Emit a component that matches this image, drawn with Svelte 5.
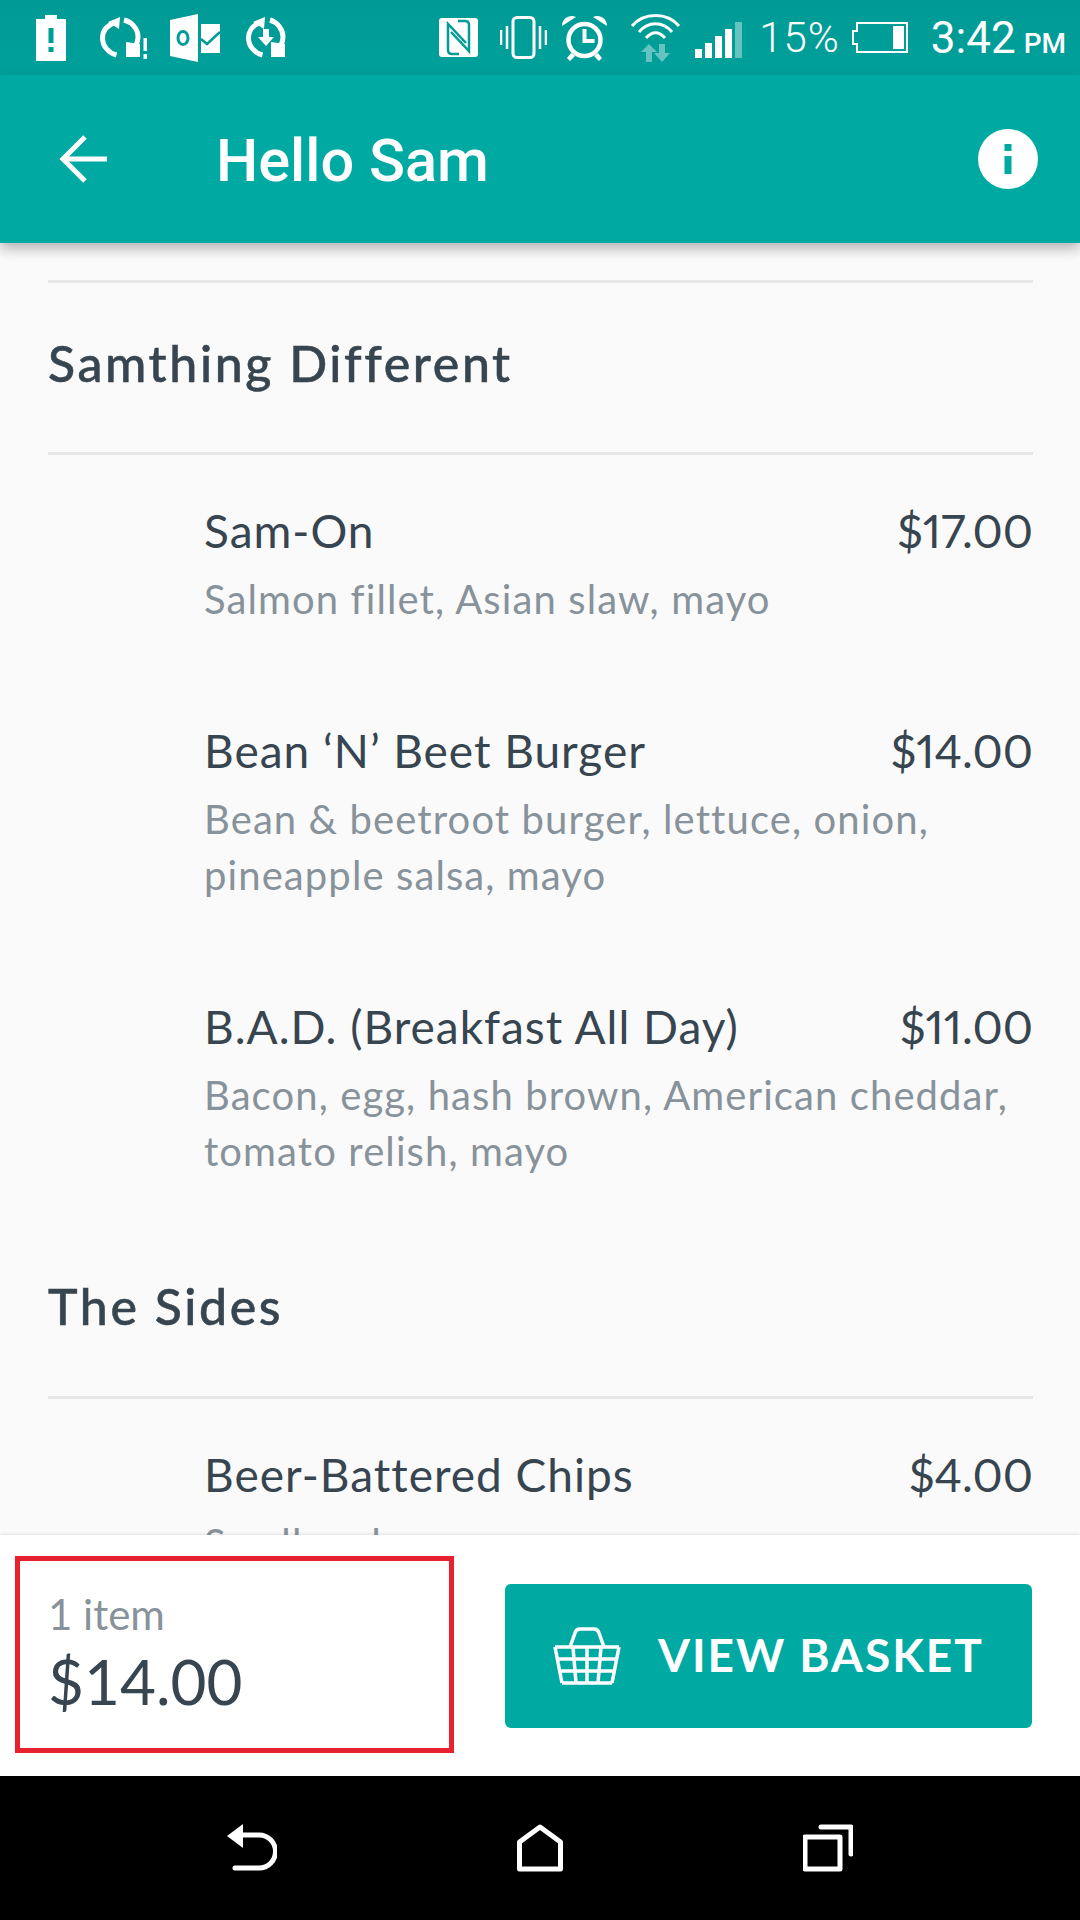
<script>
  const sections = [
    { title: 'Samthing Different', cls: 'first', items: [
      { name: 'Sam-On', price: '$17.00', desc: ['Salmon fillet, Asian slaw, mayo'] },
      { name: 'Bean ‘N’ Beet Burger', price: '$14.00', desc: ['Bean & beetroot burger, lettuce, onion,', 'pineapple salsa, mayo'] },
      { name: 'B.A.D. (Breakfast All Day)', price: '$11.00', desc: ['Bacon, egg, hash brown, American cheddar,', 'tomato relish, mayo'] }
    ]},
    { title: 'The Sides', cls: 'second', items: [
      { name: 'Beer-Battered Chips', price: '$4.00', desc: ['Small and'] }
    ]}
  ];
</script>

<div class="screen">
  <div class="status">
    <div class="st-left">
      <svg class="ic" width="30" height="46" viewBox="0 0 30 46"><path fill="#fff" d="M9 0h12v4h9v42H0V4h9z"/><rect x="12.500" y="13" width="5" height="15" fill="#009c97"/><rect x="12.500" y="32" width="5" height="5" fill="#009c97"/></svg>
      <svg class="ic s1" width="48" height="42" viewBox="0 0 48 42"><g fill="none" stroke="#fff" stroke-width="5"><path d="M14 6C6 9 2.500 15 2.500 21c0 8 6 15 14 17"/><path d="M24 3c8 2 14 9 14 17 0 3-1 6-2 8"/></g><path fill="#fff" d="M8 5L20 0l-1 12zM26 25v15h14V27z"/><rect x="43.500" y="21" width="3.500" height="13" fill="#fff"/><rect x="43.500" y="37" width="3.500" height="5" fill="#fff"/></svg>
      <svg class="ic s2" width="50" height="48" viewBox="0 0 50 48"><path fill="#fff" d="M0 6L28 0v48L0 42z"/><ellipse cx="13" cy="24" rx="5" ry="6.500" fill="none" stroke="#009c97" stroke-width="3"/><rect x="31" y="10" width="19" height="29" fill="#fff"/><path d="M31 25l6 5 13-12" fill="none" stroke="#009c97" stroke-width="2.500"/></svg>
      <svg class="ic s3" width="40" height="42" viewBox="0 0 40 42"><g fill="none" stroke="#fff" stroke-width="5"><path d="M13 6C6 9 2.500 15 2.500 21c0 8 6 15 14 17"/><path d="M24 3c7 2 13 9 13 17 0 3-1 6-2 8"/></g><path fill="#fff" d="M7 5L19 0l-1 12zM25 25v15h14V27z"/><path fill="#fff" d="M17 12h6v8h5l-8 9-8-9h5z"/></svg>
    </div>
    <div class="st-right">
      <svg class="ic" width="39" height="39" viewBox="0 0 39 39"><rect width="39" height="39" rx="3" fill="#fff"/><path d="M20 36H13q-4 0-4-4V6l18 19M19 3h7q4 0 4 4v26L12 14" fill="none" stroke="#009c97" stroke-width="2.500"/></svg>
      <svg class="ic s4" width="47" height="43" viewBox="0 0 47 43"><rect x="13" y="1.500" width="21" height="40" rx="4" fill="none" stroke="#fff" stroke-width="3"/><path d="M1 14v15M7 10v23M40 10v23M46 14v15" stroke="#fff" stroke-width="2.500"/></svg>
      <svg class="ic s5" width="45" height="46" viewBox="0 0 45 46"><circle cx="22.500" cy="25" r="16" fill="none" stroke="#fff" stroke-width="4.500"/><path d="M22.500 14v12h10" fill="none" stroke="#fff" stroke-width="4"/><path fill="#fff" d="M0 11C0 3 8-1 14 2zM45 11c0-8-8-12-14-9zM9 38l4 3-5 5-3-3zM36 38l-4 3 5 5 3-3z"/></svg>
      <svg class="ic s6" width="51" height="49" viewBox="0 0 51 49"><g fill="none" stroke="#fff" stroke-width="3"><path d="M2 13C14 -1 37 -1 49 13"/><path d="M9 19C18 8 33 8 42 19"/><path d="M16 25C22 18 29 18 35 25"/></g><path fill="#64c4c0" d="M19 31l8 8h-5v10h-6V39h-5zM32 49l8-9h-5V31h-6v9h-5z"/></svg>
      <svg class="ic s7" width="47" height="36" viewBox="0 0 47 36"><rect x="0" y="27" width="7" height="9" fill="#fff"/><rect x="10" y="21" width="7" height="15" fill="#fff"/><rect x="20" y="14" width="7" height="22" fill="#fff"/><rect x="30" y="7" width="7" height="29" fill="#fff"/><rect x="40" y="0" width="7" height="36" fill="#64c4c0"/></svg>
      <span class="pct">15%</span>
      <svg class="ic s8" width="56" height="31" viewBox="0 0 56 31"><path fill="none" stroke="#fff" stroke-width="2" d="M5 9V1h50v29H5v-8H1V9z"/><rect x="41" y="4" width="11" height="23" fill="#fff"/></svg>
      <span class="time">3:42<small>PM</small></span>
    </div>
  </div>

  <header class="appbar">
    <svg class="back" width="50" height="50" viewBox="0 0 50 50"><path d="M49 25H5M27 3L5 25l22 22" fill="none" stroke="#fff" stroke-width="5"/></svg>
    <h1>Hello Sam</h1>
    <svg class="info" width="60" height="60" viewBox="0 0 60 60"><circle cx="30" cy="30" r="30" fill="#fff"/><rect x="26.500" y="15" width="7" height="7" fill="#00aaa3"/><rect x="26.500" y="27" width="7" height="18" fill="#00aaa3"/></svg>
  </header>

  <main class="content">
    {#each sections as s}
      <section class={s.cls}>
        <h2>{s.title}</h2>
        {#each s.items as it}
          <div class="item">
            <div class="row"><span class="name">{it.name}</span><span class="price">{it.price}</span></div>
            {#each it.desc as d}<div class="desc">{d}</div>{/each}
          </div>
        {/each}
      </section>
    {/each}
  </main>

  <footer class="bar">
    <div class="total">
      <div class="count">1 item</div>
      <div class="sum">$14.00</div>
    </div>
    <button class="cta">
      <svg width="68" height="58" viewBox="0 0 68 58"><g fill="none" stroke="#fff" stroke-width="3.500"><path d="M17 20l5-14q1-4 5-4h14q4 0 5 4l5 14"/><path d="M2 20h64M5 32h58M7 44h54M9 56h50M2 20l7 36M66 20l-7 36M20 20l3 36M34 20v36M48 20l-3 36"/></g></svg>
      <span>VIEW BASKET</span>
    </button>
  </footer>

  <nav class="nav">
    <svg class="n-back" width="50" height="48" viewBox="0 0 50 48"><path fill="#fff" d="M0 12L16 0v24z"/><path d="M14 11h18a16 16 0 0 1 0 33H8" fill="none" stroke="#fff" stroke-width="5" stroke-linecap="round"/></svg>
    <svg width="46" height="48" viewBox="0 0 46 48"><path d="M2.500 45V18L23 3l20.500 15v27z" fill="none" stroke="#fff" stroke-width="5" stroke-linejoin="round"/></svg>
    <svg class="n-rec" width="50" height="48" viewBox="0 0 50 48"><rect x="2" y="13" width="35" height="32" fill="none" stroke="#fff" stroke-width="5" stroke-linejoin="round"/><path d="M18 3h30v27" fill="none" stroke="#fff" stroke-width="5" stroke-linecap="round" stroke-linejoin="round"/></svg>
  </nav>
</div>

<style>
  :global(body) { margin: 0; background: #fafafa; }
  .screen { width: 1080px; height: 1920px; display: flex; flex-direction: column; overflow: hidden; position: relative; font-family: Lato, sans-serif; color: #36454f; }
  .status { height: 75px; flex: none; background: linear-gradient(#009a95, #00a09a); display: flex; justify-content: space-between; align-items: center; padding: 0 14px 0 36px; box-sizing: border-box; color: #fff; font-family: Roboto, sans-serif; }
  .st-left, .st-right { display: flex; align-items: center; }
  .ic { flex: none; display: block; }
  .s1 { margin-left: 34px; } .s2 { margin-left: 22px; } .s3 { margin-left: 26px; }
  .s4 { margin-left: 22px; } .s5 { margin-left: 15px; } .s6 { margin-left: 23px; } .s7 { margin-left: 14px; margin-top: 4px; }
  .pct { font-size: 42px; font-weight: 300; margin-left: 17px; letter-spacing: 1px; }
  .s8 { margin-left: 12px; }
  .time { font-size: 44px; margin-left: 23px; font-weight: 400; }
  .time small { font-size: 28px; margin-left: 8px; font-weight: 500; }

  .appbar { height: 168px; flex: none; background: #00aaa3; display: flex; align-items: center; padding: 0 42px 0 58px; box-sizing: border-box; color: #fff; box-shadow: 0 6px 12px rgba(0,0,0,.28); position: relative; z-index: 2; }
  .appbar h1 { font-family: Roboto, sans-serif; font-size: 59.500px; font-weight: 500; margin: 4px 0 0 108px; flex: 1; }
  .back { flex: none; }

  .content { flex: 1; min-height: 0; overflow: hidden; padding: 37px 47px 0 48px; background: #fafafa; }
  section.first { border-top: 3px solid #e4e6e7; }
  h2 { font-size: 50px; font-weight: 500; -webkit-text-stroke: .5px #36454f; margin: 0; height: 172px; line-height: 160px; box-sizing: border-box; border-bottom: 3px solid #e4e6e7; letter-spacing: 2.600px; }
  section.second h2 { line-height: 158px; }
  .item { padding: 48px 0 48px 156px; }
  .row { display: flex; justify-content: space-between; font-size: 46px; line-height: 56px; }
  .name { letter-spacing: 1px; }
  .price { font-variant-numeric: proportional-nums; }
  .desc { font-size: 40px; line-height: 56px; color: #87929a; letter-spacing: 1.100px; }
  .item .row + .desc { margin-top: 12px; }
  .bar { height: 241px; flex: none; background: #fff; box-shadow: 0 -1px 3px rgba(0,0,0,.1); display: flex; align-items: flex-start; padding: 21px 48px 0 15px; box-sizing: border-box; position: relative; z-index: 2; }
  .total { width: 439px; height: 197px; border: 5px solid #e8212e; box-sizing: border-box; padding: 28px 0 0 28px; flex: none; }
  .count { font-size: 42px; line-height: 50px; color: #87929a; }
  .sum { font-size: 62px; line-height: 78px; margin-top: 3px; color: #36454f; }
  .cta { margin: 28px 0 0 51px; flex: 1; height: 144px; border: 0; border-radius: 6px; background: #00aaa3; color: #fff; display: flex; align-items: center; padding: 0 0 0 48px; font-family: Lato, sans-serif; }
  .cta span { font-size: 46px; font-weight: 700; margin-left: 37px; letter-spacing: 2px; padding-bottom: 4px; }
  .nav { height: 144px; flex: none; background: #000; display: flex; justify-content: center; align-items: center; gap: 238px; }
  .n-back { margin-right: 2px; } .n-rec { margin-left: 2px; }
</style>
